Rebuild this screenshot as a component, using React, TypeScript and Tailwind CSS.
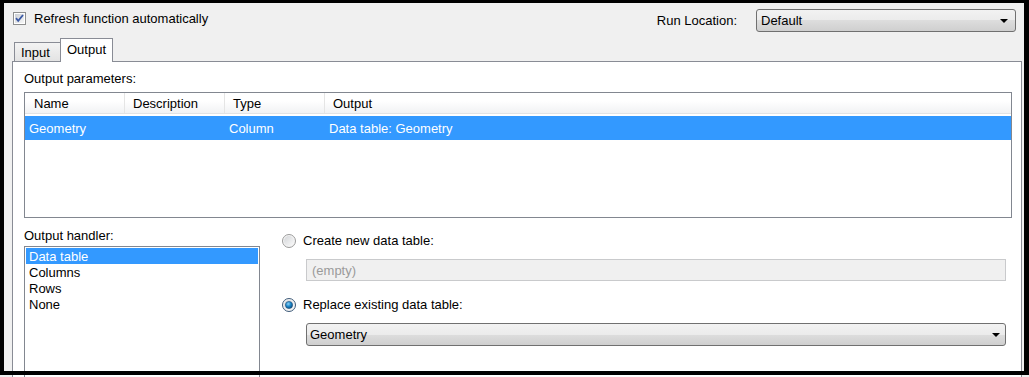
import React from "react";

function CheckBox() {
  return (
    <svg width="13" height="13" viewBox="0 0 13 13" className="shrink-0">
      <defs>
        <linearGradient id="cbFill" x1="0" y1="0" x2="1" y2="1">
          <stop offset="0" stopColor="#cbcfd5" />
          <stop offset="1" stopColor="#f7f7f7" />
        </linearGradient>
      </defs>
      <rect x="0.5" y="0.5" width="12" height="12" fill="#fff" stroke="#8e8f8f" />
      <rect x="2" y="2" width="9" height="9" fill="url(#cbFill)" />
      <path d="M3 6.2 L5.2 8.8 L10 3" fill="none" stroke="#3c5aa5" strokeWidth="1.8" />
    </svg>
  );
}

function Radio({ on, id }: { on?: boolean; id: string }) {
  return (
    <svg width="14" height="14" viewBox="0 0 14 14" className="shrink-0">
      <defs>
        <linearGradient id={`${id}o`} x1="0" y1="0" x2="1" y2="1">
          <stop offset="0" stopColor="#d4d6d9" />
          <stop offset="1" stopColor="#fafafa" />
        </linearGradient>
        <radialGradient id={`${id}d`} cx="0.4" cy="0.35" r="0.7">
          <stop offset="0" stopColor="#8fd2f7" />
          <stop offset="0.5" stopColor="#1d88c9" />
          <stop offset="1" stopColor="#0b4a7d" />
        </radialGradient>
      </defs>
      <circle cx="7" cy="7" r="6.5" fill="#f4f4f4" stroke={on ? "#3d5a78" : "#9a9a9a"} />
      <circle cx="7" cy="7" r="5" fill={`url(#${id}o)`} />
      {on && <circle cx="7" cy="7" r="3.6" fill={`url(#${id}d)`} stroke="#1f4f7a" strokeWidth="0.6" />}
    </svg>
  );
}

function Arrow() {
  return (
    <svg width="8" height="4" viewBox="0 0 8 4" className="shrink-0">
      <path d="M0 0 H8 L4 4 Z" fill="#000" />
    </svg>
  );
}

const COLS = [
  { h: "Name", v: "Geometry" },
  { h: "Description", v: "" },
  { h: "Type", v: "Column" },
  { h: "Output", v: "Data table: Geometry" },
];

export default function App() {
  return (
    <div className="relative w-[1029px] h-[377px] overflow-hidden bg-[#f0f0f0] text-[13px] leading-[15px] text-black font-['Liberation_Sans',Arial,sans-serif]">
      {/* top bar */}
      <div className="flex h-[38px] items-start">
        <label className="ml-[13px] mt-[11px] flex items-center gap-[8px]">
          <CheckBox />
          <span>Refresh function automatically</span>
        </label>
        <div className="ml-auto mr-[13px] mt-[9px] flex items-center">
          <span>Run Location:</span>
          <div className="ml-[19px] flex h-[23px] w-[260px] items-center justify-between rounded-[3px] border border-[#707070] bg-[linear-gradient(#f2f2f2,#ebebeb_50%,#dddddd_50%,#cfcfcf)] pl-[4px] pr-[7px]">
            <span>Default</span>
            <Arrow />
          </div>
        </div>
      </div>

      {/* tabs */}
      <div className="relative z-10 flex h-[24px] items-end pl-[14px]">
        <div className="mb-px flex h-[19px] w-[47px] items-center border border-b-0 border-[#898c95] bg-linear-to-b from-[#f3f3f3] to-[#e3e3e3] pl-[6px]">
          Input
        </div>
        <div className="-ml-px flex h-[24px] w-[53px] items-center justify-center border border-b-0 border-[#898c95] bg-white pb-[2px]">
          Output
        </div>
      </div>

      {/* panel */}
      <div className="-mt-px ml-[12px] h-[330px] w-[1010px] border border-[#898c95] bg-white">
        <div className="ml-[11px] pt-[9px]">Output parameters:</div>
        <div className="ml-[11px] mt-[6px] h-[126px] w-[988px] border border-[#828790]">
          <div className="flex h-[21px] border-b border-[#e2e3e5] bg-linear-to-b from-white from-40% to-[#f1f2f4]">
            {COLS.map((c, i) => (
              <div
                key={c.h}
                className={`flex items-center ${i === 0 ? "pl-[9px]" : "pl-[8px]"} ${
                  i < 3 ? "w-[100px] border-r border-[#e5e5e5]" : "flex-1"
                }`}
              >
                {c.h}
              </div>
            ))}
          </div>
          <div className="mt-[2px] flex h-[24px] bg-[#3399ff] text-white">
            {COLS.map((c, i) => (
              <div key={c.h} className={`flex items-center pl-[4px] ${i < 3 ? "w-[100px]" : "flex-1"}`}>
                {c.v}
              </div>
            ))}
          </div>
        </div>

        <div className="flex">
          <div className="ml-[11px] w-[236px] shrink-0">
            <div className="mt-[10px]">Output handler:</div>
            <div className="mt-[3px] h-[140px] border border-[#828790] p-px">
              {["Data table", "Columns", "Rows", "None"].map((t, i) => (
                <div
                  key={t}
                  className={`flex h-[16px] items-center pl-[3px] ${i === 0 ? "bg-[#3399ff] text-white" : ""}`}
                >
                  {t}
                </div>
              ))}
            </div>
          </div>

          <div className="ml-[22px] flex-1 pt-[15px] pr-[15px]">
            <label className="flex h-[15px] items-center gap-[7px]">
              <Radio id="r1" />
              <span>Create new data table:</span>
            </label>
            <div className="ml-[24px] mt-[11px] flex h-[22px] w-[700px] items-center border border-[#c9cacc] bg-[#f0f0f0] pl-[5px] text-[#9a9a9a]">
              (empty)
            </div>
            <label className="mt-[16px] flex h-[15px] items-center gap-[7px]">
              <Radio id="r2" on />
              <span>Replace existing data table:</span>
            </label>
            <div className="ml-[24px] mt-[11px] flex h-[23px] w-[700px] items-center justify-between rounded-[3px] border border-[#707070] bg-[linear-gradient(#f2f2f2,#ebebeb_50%,#dddddd_50%,#cfcfcf)] pl-[3px] pr-[5px]">
              <span>Geometry</span>
              <Arrow />
            </div>
          </div>
        </div>
      </div>

      {/* black frame drawn around the capture */}
      <div className="pointer-events-none absolute left-0 top-0 h-[375px] w-full border-b-4 border-l-4 border-r-[5px] border-t-[3px] border-black" />
    </div>
  );
}
